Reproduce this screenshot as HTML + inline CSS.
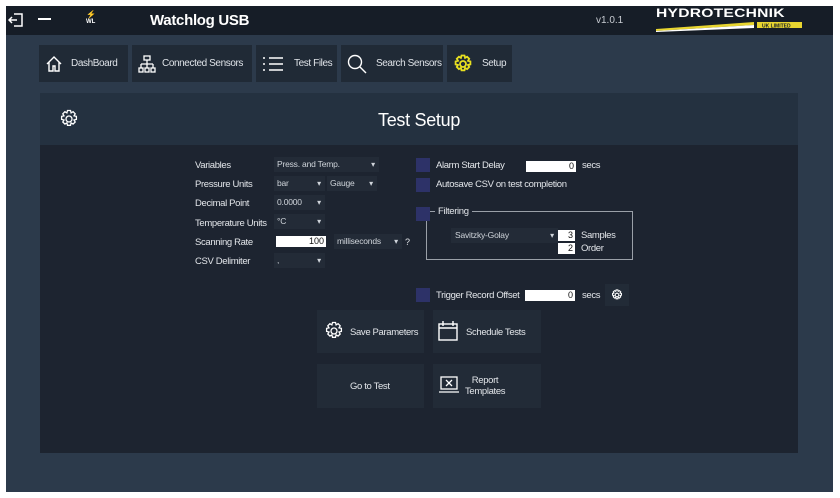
<!DOCTYPE html>
<html><head><style>
*{margin:0;padding:0;box-sizing:border-box}
body{width:840px;height:498px;background:#fff;font-family:"Liberation Sans",sans-serif;position:relative;overflow:hidden;color:#e6e9ee}
.a{position:absolute;white-space:nowrap}
.top{left:6px;top:6px;width:827px;height:29px;background:#161d27}
.app{left:6px;top:35px;width:827px;height:457px;background:#2c3a4b}
.nav{top:45px;height:37px;background:#202a36;font-size:10px;letter-spacing:-0.4px;color:#dfe3e8;display:flex;align-items:center}
.panel{left:40px;top:93px;width:758px;height:360px;background:#1d2430}
.ph{left:40px;top:93px;width:758px;height:52px;background:#243140}
.lbl{font-size:9.5px;letter-spacing:-0.35px;color:#e3e6ea}
.dd{background:#232b37;font-size:8.5px;letter-spacing:-0.2px;color:#cfd4da;height:15px;line-height:15px;padding-left:3px}
.dd:after{content:"▾";position:absolute;right:4px;font-size:8px}
.inp{background:#fff;color:#111;font-size:9px;text-align:right;height:11px;line-height:11px;padding-right:2px}
.cb{width:14px;height:14px;background:#2d3268}
.btn{background:#222b37;font-size:10px;color:#e3e6ea}
</style></head><body>
<div class="a top"></div>
<div class="a app"></div>
<svg class="a" style="left:8px;top:12px" width="16" height="16" viewBox="0 0 16 16" fill="none" stroke="#fff" stroke-width="1.5"><path d="M6 2h8v12H6M1 8h8M4 5L1 8l3 3"/></svg>
<div class="a" style="left:38px;top:18px;width:13px;height:2px;background:#fff"></div>
<div class="a" style="left:86px;top:10px;font-size:8px;color:#e0d040;font-weight:bold">⚡</div>
<div class="a" style="left:86px;top:19px;font-size:6px;color:#fff;font-weight:bold">WL</div>
<div class="a" style="left:150px;top:12px;font-size:15px;font-weight:bold;color:#fff;letter-spacing:-0.3px">Watchlog USB</div>
<div class="a" style="left:596px;top:15px;font-size:10px;color:#c8ccd2">v1.0.1</div>
<div class="a" style="left:656px;top:7px;font-size:12px;line-height:12px;font-weight:bold;color:#fff;letter-spacing:0.2px;transform:scaleX(1.3);transform-origin:left">HYDROTECHNIK</div>
<svg class="a" style="left:654px;top:18px" width="150" height="14"><polygon points="2,11 100,4 100,7 2,13" fill="#e8d530"/><polygon points="2,13 100,7 100,10 2,14" fill="#fff"/><rect x="103" y="4" width="45" height="6" fill="#e8d530"/><text x="108" y="9.5" font-size="5" fill="#161d27" font-weight="bold" font-family="Liberation Sans">UK LIMITED</text></svg>
<div class="a nav" style="left:39px;width:89px"><svg style="margin:0 8px 0 6px" width="18" height="18" viewBox="0 0 18 18" fill="none" stroke="#fff" stroke-width="1.4"><path d="M2 9L9 2l7 7M4 7v9h4v-5h2v5h4V7"/></svg>DashBoard</div>
<div class="a nav" style="left:132px;width:120px"><svg style="margin:0 6px 0 6px" width="18" height="18" viewBox="0 0 18 18" fill="none" stroke="#fff" stroke-width="1.3"><rect x="6" y="1" width="6" height="4"/><path d="M9 5v4M3 9h12M3 9v4M9 9v4M15 9v4"/><rect x="1" y="13" width="4" height="4"/><rect x="7" y="13" width="4" height="4"/><rect x="13" y="13" width="4" height="4"/></svg>Connected Sensors</div>
<div class="a nav" style="left:256px;width:81px"><svg style="margin:0 10px 0 6px" width="22" height="18" viewBox="0 0 22 18" fill="none" stroke="#fff" stroke-width="1.6"><path d="M1 3h2M1 9h2M1 15h2M7 3h14M7 9h14M7 15h14"/></svg>Test Files</div>
<div class="a nav" style="left:341px;width:102px"><svg style="margin:0 9px 0 6px" width="20" height="20" viewBox="0 0 20 20" fill="none" stroke="#fff" stroke-width="1.4"><circle cx="8" cy="8" r="6.5"/><path d="M12.5 12.5L19 19"/></svg>Search Sensors</div>
<div class="a nav" style="left:447px;width:65px"><svg style="margin:0 9px 0 6px" width="20" height="20" viewBox="0 0 20 20" fill="none" stroke="#e8e020" stroke-width="1.8"><circle cx="10" cy="10" r="3"/><path d="M8.5 1.5h3l.6 2.4 2-1.2 2.1 2.1-1.2 2 2.4.6v3l-2.4.6 1.2 2-2.1 2.1-2-1.2-.6 2.4h-3l-.6-2.4-2 1.2-2.1-2.1 1.2-2-2.4-.6v-3l2.4-.6-1.2-2 2.1-2.1 2 1.2z"/></svg>Setup</div>
<div class="a panel"></div>
<div class="a ph"></div>
<svg class="a" style="left:59px;top:109px" width="20" height="20" viewBox="0 0 20 20" fill="none" stroke="#fff" stroke-width="1.3"><circle cx="10" cy="10" r="3"/><path d="M8.5 1.5h3l.6 2.4 2-1.2 2.1 2.1-1.2 2 2.4.6v3l-2.4.6 1.2 2-2.1 2.1-2-1.2-.6 2.4h-3l-.6-2.4-2 1.2-2.1-2.1 1.2-2-2.4-.6v-3l2.4-.6-1.2-2 2.1-2.1 2 1.2z"/></svg>
<div class="a" style="left:378px;top:110px;font-size:18px;color:#fff;letter-spacing:-0.3px">Test Setup</div>
<div class="a lbl" style="left:195px;top:160px">Variables</div>
<div class="a lbl" style="left:195px;top:179px">Pressure Units</div>
<div class="a lbl" style="left:195px;top:198px">Decimal Point</div>
<div class="a lbl" style="left:195px;top:218px">Temperature Units</div>
<div class="a lbl" style="left:195px;top:237px">Scanning Rate</div>
<div class="a lbl" style="left:195px;top:256px">CSV Delimiter</div>
<div class="a dd" style="left:274px;top:157px;width:105px">Press. and Temp.</div>
<div class="a dd" style="left:274px;top:176px;width:51px">bar</div>
<div class="a dd" style="left:327px;top:176px;width:50px">Gauge</div>
<div class="a dd" style="left:274px;top:195px;width:51px">0.0000</div>
<div class="a dd" style="left:274px;top:214px;width:51px">°C</div>
<div class="a inp" style="left:276px;top:236px;width:50px">100</div>
<div class="a dd" style="left:334px;top:234px;width:68px">milliseconds</div>
<div class="a lbl" style="left:405px;top:237px;font-size:9px">?</div>
<div class="a dd" style="left:274px;top:253px;width:51px">,</div>
<div class="a cb" style="left:416px;top:158px"></div>
<div class="a lbl" style="left:436px;top:160px">Alarm Start Delay</div>
<div class="a inp" style="left:526px;top:161px;width:50px">0</div>
<div class="a lbl" style="left:582px;top:160px">secs</div>
<div class="a cb" style="left:416px;top:178px"></div>
<div class="a lbl" style="left:436px;top:179px">Autosave CSV on test completion</div>
<div class="a" style="left:426px;top:211px;width:207px;height:49px;border:1px solid #9aa0a8"></div>
<div class="a cb" style="left:416px;top:207px"></div>
<div class="a lbl" style="left:435px;top:206px;background:#1d2430;padding:0 3px">Filtering</div>
<div class="a dd" style="left:451px;top:228px;width:107px;padding-left:4px">Savitzky-Golay</div>
<div class="a inp" style="left:558px;top:230px;width:17px">3</div>
<div class="a lbl" style="left:581px;top:230px">Samples</div>
<div class="a inp" style="left:558px;top:243px;width:17px">2</div>
<div class="a lbl" style="left:581px;top:243px">Order</div>
<div class="a cb" style="left:416px;top:288px"></div>
<div class="a lbl" style="left:436px;top:290px">Trigger Record Offset</div>
<div class="a inp" style="left:525px;top:290px;width:50px">0</div>
<div class="a lbl" style="left:582px;top:290px">secs</div>
<div class="a btn" style="left:605px;top:284px;width:24px;height:22px"></div>
<svg class="a" style="left:611px;top:289px" width="12" height="12" viewBox="0 0 20 20" fill="none" stroke="#fff" stroke-width="1.8"><circle cx="10" cy="10" r="3"/><path d="M8.5 1.5h3l.6 2.4 2-1.2 2.1 2.1-1.2 2 2.4.6v3l-2.4.6 1.2 2-2.1 2.1-2-1.2-.6 2.4h-3l-.6-2.4-2 1.2-2.1-2.1 1.2-2-2.4-.6v-3l2.4-.6-1.2-2 2.1-2.1 2 1.2z"/></svg>
<div class="a btn" style="left:317px;top:310px;width:107px;height:43px"></div>
<svg class="a" style="left:324px;top:321px" width="20" height="20" viewBox="0 0 20 20" fill="none" stroke="#fff" stroke-width="1.3"><circle cx="10" cy="10" r="3"/><path d="M8.5 1.5h3l.6 2.4 2-1.2 2.1 2.1-1.2 2 2.4.6v3l-2.4.6 1.2 2-2.1 2.1-2-1.2-.6 2.4h-3l-.6-2.4-2 1.2-2.1-2.1 1.2-2-2.4-.6v-3l2.4-.6-1.2-2 2.1-2.1 2 1.2z"/></svg>
<div class="a lbl" style="left:350px;top:327px;font-size:9.5px">Save Parameters</div>
<div class="a btn" style="left:433px;top:310px;width:108px;height:43px"></div>
<svg class="a" style="left:438px;top:320px" width="20" height="22" viewBox="0 0 20 22" fill="none" stroke="#fff" stroke-width="1.4"><rect x="1" y="4" width="18" height="16"/><path d="M1 8h18M5 1v5M15 1v5"/></svg>
<div class="a lbl" style="left:466px;top:327px;font-size:9.5px">Schedule Tests</div>
<div class="a btn" style="left:317px;top:364px;width:107px;height:44px"></div>
<div class="a lbl" style="left:350px;top:381px;font-size:9.5px">Go to Test</div>
<div class="a btn" style="left:433px;top:364px;width:108px;height:44px"></div>
<svg class="a" style="left:439px;top:376px" width="20" height="18" viewBox="0 0 20 18" fill="none" stroke="#fff" stroke-width="1.3"><rect x="2" y="1" width="16" height="12"/><path d="M0 16h20M7 4l6 6M13 4l-6 6"/></svg>
<div class="a lbl" style="left:465px;top:375px;font-size:9.5px;text-align:center;line-height:11px;width:40px">Report<br>Templates</div>
</body></html>
